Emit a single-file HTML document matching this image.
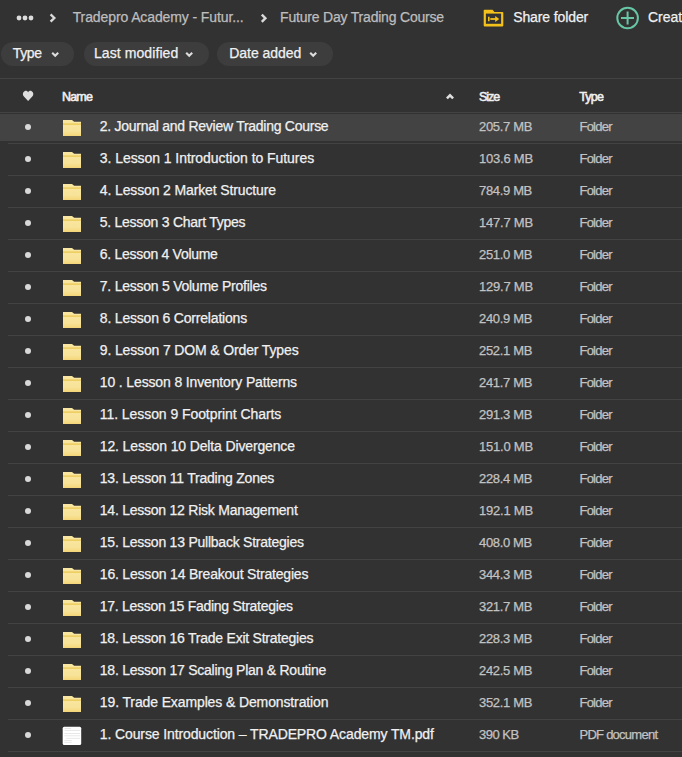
<!DOCTYPE html>
<html><head><meta charset="utf-8"><style>
html,body{margin:0;padding:0;width:682px;height:757px;overflow:hidden;background:#323232;}
body{position:relative;font-family:"Liberation Sans",sans-serif;}
.a{position:absolute;white-space:nowrap;}
div.a{-webkit-text-stroke:0.25px currentColor;}
.t{font-size:14px;line-height:16px;}
.wh{color:#f0f0f0;}
.bc{color:#bdbdbd;}
.s{font-size:13px;line-height:16px;color:#c2c2c2;}
.h{font-size:12.5px;line-height:16px;color:#f0f0f0;-webkit-text-stroke:0.55px currentColor!important;}
.sep{position:absolute;left:0;width:682px;height:1px;background:#434343;}
.chip{position:absolute;top:42px;height:24px;border-radius:12px;background:#3d3d3d;}
</style></head><body>

<div class="chip" style="left:1px;width:73px"></div>
<div class="chip" style="left:84px;width:125px"></div>
<div class="chip" style="left:217px;width:116px"></div>
<div class="a" style="left:0;top:114px;width:682px;height:27px;background:#434343"></div>
<div class="sep" style="top:78px"></div>
<div class="sep" style="top:112px"></div>
<div class="sep" style="top:143px;left:8px"></div>
<div class="sep" style="top:175px;left:8px"></div>
<div class="sep" style="top:207px;left:8px"></div>
<div class="sep" style="top:239px;left:8px"></div>
<div class="sep" style="top:271px;left:8px"></div>
<div class="sep" style="top:303px;left:8px"></div>
<div class="sep" style="top:335px;left:8px"></div>
<div class="sep" style="top:367px;left:8px"></div>
<div class="sep" style="top:399px;left:8px"></div>
<div class="sep" style="top:431px;left:8px"></div>
<div class="sep" style="top:463px;left:8px"></div>
<div class="sep" style="top:495px;left:8px"></div>
<div class="sep" style="top:527px;left:8px"></div>
<div class="sep" style="top:559px;left:8px"></div>
<div class="sep" style="top:591px;left:8px"></div>
<div class="sep" style="top:623px;left:8px"></div>
<div class="sep" style="top:655px;left:8px"></div>
<div class="sep" style="top:687px;left:8px"></div>
<div class="sep" style="top:719px;left:8px"></div>
<div class="sep" style="top:751px;left:8px"></div>
<svg class="a" style="left:0;top:0" width="682" height="757" viewBox="0 0 682 757">
<circle cx="19" cy="18" r="2.4" fill="#dcdcdc"/><circle cx="25" cy="18" r="2.4" fill="#dcdcdc"/><circle cx="31" cy="18" r="2.4" fill="#dcdcdc"/>
<path d="M50.6 14.4 L54.3 18 L50.6 21.6" stroke="#dadada" stroke-width="2.4" fill="none"/>
<path d="M261.8 14.6 L265.4 18.2 L261.8 21.8" stroke="#dadada" stroke-width="2.4" fill="none"/>
<path d="M483.7 10.5 Q483.7 9.7 484.5 9.7 H492.5 L494.5 11.9 H502.5 Q503.3 11.9 503.3 12.7 V25.6 Q503.3 26.4 502.5 26.4 H484.5 Q483.7 26.4 483.7 25.6 Z" fill="#f4c01a"/>
<rect x="485.9" y="13.6" width="15.2" height="10.2" fill="#323232"/>
<path d="M488.8 16.8 V21.2" stroke="#f4c01a" stroke-width="1.6"/>
<path d="M490.3 19 H496" stroke="#f4c01a" stroke-width="1.8"/>
<path d="M495.2 15.9 L499.2 19 L495.2 22.1 Z" fill="#f4c01a"/>
<circle cx="627.6" cy="18" r="10.3" fill="none" stroke="#67c6a3" stroke-width="2"/>
<path d="M627.6 11.5 V24.5 M621 18 H634" stroke="#67c6a3" stroke-width="2"/>
<path d="M52.2 52.8 L55.2 55.8 L58.2 52.8" stroke="#dcdcdc" stroke-width="2.1" fill="none"/>
<path d="M186.2 52.8 L189.2 55.8 L192.2 52.8" stroke="#dcdcdc" stroke-width="2.1" fill="none"/>
<path d="M310.2 52.8 L313.2 55.8 L316.2 52.8" stroke="#dcdcdc" stroke-width="2.1" fill="none"/>
<path d="M28.1 100.9 L23.9 96.6 C22.3 95 22.6 92.2 24.5 91.2 C26 90.4 27.4 91 28.1 92.3 C28.8 91 30.2 90.4 31.7 91.2 C33.6 92.2 33.9 95 32.3 96.6 Z" fill="#dedede"/>
<defs><linearGradient id="fg" x1="0" y1="0" x2="0" y2="1"><stop offset="0" stop-color="#f9e6a0"/><stop offset="0.7" stop-color="#f8e399"/><stop offset="1" stop-color="#f4d677"/></linearGradient></defs>
<path d="M446.9 98.4 L450 95.3 L453.1 98.4" stroke="#e0e0e0" stroke-width="2.5" fill="none"/>

<circle cx="28" cy="127" r="3" fill="#d8d8d8"/>
<path d="M63 120 H72 L74.2 121.8 H81 V136 H63 Z" fill="url(#fg)"/>
<rect x="63" y="123.5" width="18" height="1.2" fill="#e9c64c"/>
<circle cx="28" cy="159" r="3" fill="#d8d8d8"/>
<path d="M63 152 H72 L74.2 153.8 H81 V168 H63 Z" fill="url(#fg)"/>
<rect x="63" y="155.5" width="18" height="1.2" fill="#e9c64c"/>
<circle cx="28" cy="191" r="3" fill="#d8d8d8"/>
<path d="M63 184 H72 L74.2 185.8 H81 V200 H63 Z" fill="url(#fg)"/>
<rect x="63" y="187.5" width="18" height="1.2" fill="#e9c64c"/>
<circle cx="28" cy="223" r="3" fill="#d8d8d8"/>
<path d="M63 216 H72 L74.2 217.8 H81 V232 H63 Z" fill="url(#fg)"/>
<rect x="63" y="219.5" width="18" height="1.2" fill="#e9c64c"/>
<circle cx="28" cy="255" r="3" fill="#d8d8d8"/>
<path d="M63 248 H72 L74.2 249.8 H81 V264 H63 Z" fill="url(#fg)"/>
<rect x="63" y="251.5" width="18" height="1.2" fill="#e9c64c"/>
<circle cx="28" cy="287" r="3" fill="#d8d8d8"/>
<path d="M63 280 H72 L74.2 281.8 H81 V296 H63 Z" fill="url(#fg)"/>
<rect x="63" y="283.5" width="18" height="1.2" fill="#e9c64c"/>
<circle cx="28" cy="319" r="3" fill="#d8d8d8"/>
<path d="M63 312 H72 L74.2 313.8 H81 V328 H63 Z" fill="url(#fg)"/>
<rect x="63" y="315.5" width="18" height="1.2" fill="#e9c64c"/>
<circle cx="28" cy="351" r="3" fill="#d8d8d8"/>
<path d="M63 344 H72 L74.2 345.8 H81 V360 H63 Z" fill="url(#fg)"/>
<rect x="63" y="347.5" width="18" height="1.2" fill="#e9c64c"/>
<circle cx="28" cy="383" r="3" fill="#d8d8d8"/>
<path d="M63 376 H72 L74.2 377.8 H81 V392 H63 Z" fill="url(#fg)"/>
<rect x="63" y="379.5" width="18" height="1.2" fill="#e9c64c"/>
<circle cx="28" cy="415" r="3" fill="#d8d8d8"/>
<path d="M63 408 H72 L74.2 409.8 H81 V424 H63 Z" fill="url(#fg)"/>
<rect x="63" y="411.5" width="18" height="1.2" fill="#e9c64c"/>
<circle cx="28" cy="447" r="3" fill="#d8d8d8"/>
<path d="M63 440 H72 L74.2 441.8 H81 V456 H63 Z" fill="url(#fg)"/>
<rect x="63" y="443.5" width="18" height="1.2" fill="#e9c64c"/>
<circle cx="28" cy="479" r="3" fill="#d8d8d8"/>
<path d="M63 472 H72 L74.2 473.8 H81 V488 H63 Z" fill="url(#fg)"/>
<rect x="63" y="475.5" width="18" height="1.2" fill="#e9c64c"/>
<circle cx="28" cy="511" r="3" fill="#d8d8d8"/>
<path d="M63 504 H72 L74.2 505.8 H81 V520 H63 Z" fill="url(#fg)"/>
<rect x="63" y="507.5" width="18" height="1.2" fill="#e9c64c"/>
<circle cx="28" cy="543" r="3" fill="#d8d8d8"/>
<path d="M63 536 H72 L74.2 537.8 H81 V552 H63 Z" fill="url(#fg)"/>
<rect x="63" y="539.5" width="18" height="1.2" fill="#e9c64c"/>
<circle cx="28" cy="575" r="3" fill="#d8d8d8"/>
<path d="M63 568 H72 L74.2 569.8 H81 V584 H63 Z" fill="url(#fg)"/>
<rect x="63" y="571.5" width="18" height="1.2" fill="#e9c64c"/>
<circle cx="28" cy="607" r="3" fill="#d8d8d8"/>
<path d="M63 600 H72 L74.2 601.8 H81 V616 H63 Z" fill="url(#fg)"/>
<rect x="63" y="603.5" width="18" height="1.2" fill="#e9c64c"/>
<circle cx="28" cy="639" r="3" fill="#d8d8d8"/>
<path d="M63 632 H72 L74.2 633.8 H81 V648 H63 Z" fill="url(#fg)"/>
<rect x="63" y="635.5" width="18" height="1.2" fill="#e9c64c"/>
<circle cx="28" cy="671" r="3" fill="#d8d8d8"/>
<path d="M63 664 H72 L74.2 665.8 H81 V680 H63 Z" fill="url(#fg)"/>
<rect x="63" y="667.5" width="18" height="1.2" fill="#e9c64c"/>
<circle cx="28" cy="703" r="3" fill="#d8d8d8"/>
<path d="M63 696 H72 L74.2 697.8 H81 V712 H63 Z" fill="url(#fg)"/>
<rect x="63" y="699.5" width="18" height="1.2" fill="#e9c64c"/>
<circle cx="28" cy="735" r="3" fill="#d8d8d8"/>
<rect x="62.7" y="726.7" width="18.5" height="18.2" rx="1.5" fill="#ffffff"/>
<rect x="64.5" y="728.3000000000001" width="6.5" height="0.7" fill="#dedede"/>
<rect x="64.5" y="730.3000000000001" width="15.5" height="0.7" fill="#dedede"/>
<rect x="64.2" y="733.3000000000001" width="15.8" height="0.7" fill="#dedede"/>
<rect x="64.2" y="735.5" width="15.8" height="0.7" fill="#dedede"/>
<rect x="65.8" y="737.9000000000001" width="14.2" height="0.7" fill="#dedede"/>
<rect x="64.2" y="740.3000000000001" width="7.5" height="0.7" fill="#dedede"/>
<rect x="64.2" y="741.9000000000001" width="7.5" height="0.7" fill="#dedede"/>
</svg>
<div class="a t bc" id="bc1" style="left:72.70px;top:9.15px;letter-spacing:-0.107px;">Tradepro Academy - Futur...</div>
<div class="a t bc" id="bc2" style="left:280.10px;top:9.15px;letter-spacing:-0.202px;">Future Day Trading Course</div>
<div class="a t wh" id="sh" style="left:513.20px;top:8.65px;letter-spacing:-0.108px;">Share folder</div>
<div class="a t wh" id="cr" style="left:648.00px;top:9.15px;">Create</div>
<div class="a t wh" id="c1" style="left:12.70px;top:45.15px;letter-spacing:-0.333px;">Type</div>
<div class="a t wh" id="c2" style="left:94.00px;top:45.15px;letter-spacing:0.079px;">Last modified</div>
<div class="a t wh" id="c3" style="left:229.30px;top:45.15px;letter-spacing:-0.055px;">Date added</div>
<div class="a h" id="hn" style="left:62.00px;top:88.97px;letter-spacing:-0.829px;">Name</div>
<div class="a h" id="hs" style="left:479.00px;top:89.17px;letter-spacing:-1.043px;">Size</div>
<div class="a h" id="ht" style="left:579.20px;top:89.17px;letter-spacing:-0.783px;">Type</div>
<div class="a t wh" id="n0" style="left:99.80px;top:118.15px;letter-spacing:-0.265px;">2. Journal and Review Trading Course</div>
<div class="a s" id="s0" style="left:479.10px;top:119.00px;letter-spacing:-0.345px;">205.7 MB</div>
<div class="a s" id="y0" style="left:579.50px;top:119.00px;letter-spacing:-0.774px;">Folder</div>
<div class="a t wh" id="n1" style="left:99.80px;top:150.15px;letter-spacing:-0.059px;">3. Lesson 1 Introduction to Futures</div>
<div class="a s" id="s1" style="left:479.10px;top:151.00px;letter-spacing:-0.241px;">103.6 MB</div>
<div class="a s" id="y1" style="left:579.50px;top:151.00px;letter-spacing:-0.774px;">Folder</div>
<div class="a t wh" id="n2" style="left:99.80px;top:182.15px;letter-spacing:-0.130px;">4. Lesson 2 Market Structure</div>
<div class="a s" id="s2" style="left:479.10px;top:183.00px;letter-spacing:-0.351px;">784.9 MB</div>
<div class="a s" id="y2" style="left:579.50px;top:183.00px;letter-spacing:-0.774px;">Folder</div>
<div class="a t wh" id="n3" style="left:99.80px;top:214.15px;letter-spacing:-0.265px;">5. Lesson 3 Chart Types</div>
<div class="a s" id="s3" style="left:479.10px;top:215.00px;letter-spacing:-0.241px;">147.7 MB</div>
<div class="a s" id="y3" style="left:579.50px;top:215.00px;letter-spacing:-0.774px;">Folder</div>
<div class="a t wh" id="n4" style="left:99.80px;top:246.15px;letter-spacing:-0.289px;">6. Lesson 4 Volume</div>
<div class="a s" id="s4" style="left:479.10px;top:247.00px;letter-spacing:-0.345px;">251.0 MB</div>
<div class="a s" id="y4" style="left:579.50px;top:247.00px;letter-spacing:-0.774px;">Folder</div>
<div class="a t wh" id="n5" style="left:99.80px;top:278.15px;letter-spacing:-0.245px;">7. Lesson 5 Volume Profiles</div>
<div class="a s" id="s5" style="left:479.10px;top:279.00px;letter-spacing:-0.241px;">129.7 MB</div>
<div class="a s" id="y5" style="left:579.50px;top:279.00px;letter-spacing:-0.774px;">Folder</div>
<div class="a t wh" id="n6" style="left:99.80px;top:310.15px;letter-spacing:-0.189px;">8. Lesson 6 Correlations</div>
<div class="a s" id="s6" style="left:479.10px;top:311.00px;letter-spacing:-0.345px;">240.9 MB</div>
<div class="a s" id="y6" style="left:579.50px;top:311.00px;letter-spacing:-0.774px;">Folder</div>
<div class="a t wh" id="n7" style="left:99.80px;top:342.15px;letter-spacing:-0.142px;">9. Lesson 7 DOM &amp; Order Types</div>
<div class="a s" id="s7" style="left:479.10px;top:343.00px;letter-spacing:-0.345px;">252.1 MB</div>
<div class="a s" id="y7" style="left:579.50px;top:343.00px;letter-spacing:-0.774px;">Folder</div>
<div class="a t wh" id="n8" style="left:99.80px;top:374.15px;letter-spacing:-0.139px;">10 . Lesson 8 Inventory Patterns</div>
<div class="a s" id="s8" style="left:479.10px;top:375.00px;letter-spacing:-0.345px;">241.7 MB</div>
<div class="a s" id="y8" style="left:579.50px;top:375.00px;letter-spacing:-0.774px;">Folder</div>
<div class="a t wh" id="n9" style="left:99.80px;top:406.15px;letter-spacing:-0.067px;">11. Lesson 9 Footprint Charts</div>
<div class="a s" id="s9" style="left:479.10px;top:407.00px;letter-spacing:-0.345px;">291.3 MB</div>
<div class="a s" id="y9" style="left:579.50px;top:407.00px;letter-spacing:-0.774px;">Folder</div>
<div class="a t wh" id="n10" style="left:99.80px;top:438.15px;letter-spacing:-0.139px;">12. Lesson 10 Delta Divergence</div>
<div class="a s" id="s10" style="left:479.10px;top:439.00px;letter-spacing:-0.241px;">151.0 MB</div>
<div class="a s" id="y10" style="left:579.50px;top:439.00px;letter-spacing:-0.774px;">Folder</div>
<div class="a t wh" id="n11" style="left:99.80px;top:470.15px;letter-spacing:-0.225px;">13. Lesson 11 Trading Zones</div>
<div class="a s" id="s11" style="left:479.10px;top:471.00px;letter-spacing:-0.345px;">228.4 MB</div>
<div class="a s" id="y11" style="left:579.50px;top:471.00px;letter-spacing:-0.774px;">Folder</div>
<div class="a t wh" id="n12" style="left:99.80px;top:502.15px;letter-spacing:-0.238px;">14. Lesson 12 Risk Management</div>
<div class="a s" id="s12" style="left:479.10px;top:503.00px;letter-spacing:-0.241px;">192.1 MB</div>
<div class="a s" id="y12" style="left:579.50px;top:503.00px;letter-spacing:-0.774px;">Folder</div>
<div class="a t wh" id="n13" style="left:99.80px;top:534.15px;letter-spacing:-0.233px;">15. Lesson 13 Pullback Strategies</div>
<div class="a s" id="s13" style="left:479.10px;top:535.00px;letter-spacing:-0.373px;">408.0 MB</div>
<div class="a s" id="y13" style="left:579.50px;top:535.00px;letter-spacing:-0.774px;">Folder</div>
<div class="a t wh" id="n14" style="left:99.80px;top:566.15px;letter-spacing:-0.194px;">16. Lesson 14 Breakout Strategies</div>
<div class="a s" id="s14" style="left:479.10px;top:567.00px;letter-spacing:-0.340px;">344.3 MB</div>
<div class="a s" id="y14" style="left:579.50px;top:567.00px;letter-spacing:-0.774px;">Folder</div>
<div class="a t wh" id="n15" style="left:99.80px;top:598.15px;letter-spacing:-0.280px;">17. Lesson 15 Fading Strategies</div>
<div class="a s" id="s15" style="left:479.10px;top:599.00px;letter-spacing:-0.340px;">321.7 MB</div>
<div class="a s" id="y15" style="left:579.50px;top:599.00px;letter-spacing:-0.774px;">Folder</div>
<div class="a t wh" id="n16" style="left:99.80px;top:630.15px;letter-spacing:-0.240px;">18. Lesson 16 Trade Exit Strategies</div>
<div class="a s" id="s16" style="left:479.10px;top:631.00px;letter-spacing:-0.345px;">228.3 MB</div>
<div class="a s" id="y16" style="left:579.50px;top:631.00px;letter-spacing:-0.774px;">Folder</div>
<div class="a t wh" id="n17" style="left:99.80px;top:662.15px;letter-spacing:-0.245px;">18. Lesson 17 Scaling Plan &amp; Routine</div>
<div class="a s" id="s17" style="left:479.10px;top:663.00px;letter-spacing:-0.345px;">242.5 MB</div>
<div class="a s" id="y17" style="left:579.50px;top:663.00px;letter-spacing:-0.774px;">Folder</div>
<div class="a t wh" id="n18" style="left:99.80px;top:694.15px;letter-spacing:-0.119px;">19. Trade Examples &amp; Demonstration</div>
<div class="a s" id="s18" style="left:479.10px;top:695.00px;letter-spacing:-0.340px;">352.1 MB</div>
<div class="a s" id="y18" style="left:579.50px;top:695.00px;letter-spacing:-0.774px;">Folder</div>
<div class="a t wh" id="n19" style="left:99.80px;top:726.15px;letter-spacing:-0.115px;">1. Course Introduction – TRADEPRO Academy TM.pdf</div>
<div class="a s" id="s19" style="left:479.10px;top:727.00px;letter-spacing:-0.518px;">390 KB</div>
<div class="a s" id="y19" style="left:579.50px;top:727.00px;letter-spacing:-0.746px;">PDF document</div>
</body></html>
